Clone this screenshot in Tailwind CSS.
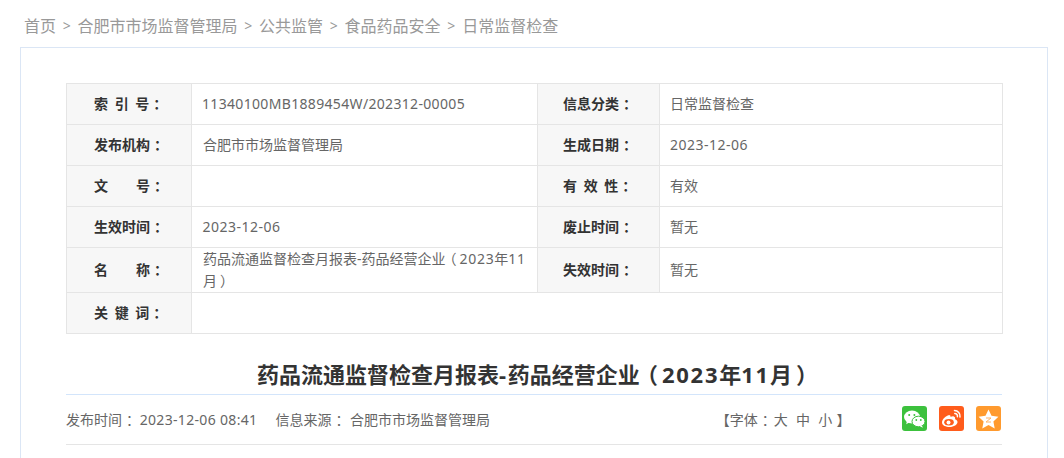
<!DOCTYPE html>
<html lang="zh-CN">
<head>
<meta charset="utf-8"/>
<title>日常监督检查</title>
<script src="https://cdn.jsdelivr.net/npm/@tailwindcss/browser@4"></script>
</head>
<body class="bg-white font-['Noto_Sans','Noto_Sans_CJK_SC',sans-serif] overflow-hidden h-[458px]">
<div class="w-[1028px] ml-[20px]">
  <nav class="h-[47px] pl-[4px] pt-[14px] text-[16px] leading-[24px] text-[#999] flex items-start gap-[6.75px]">
    <a>首页</a><span class="text-[14px]">&gt;</span><a>合肥市市场监督管理局</a><span class="text-[14px]">&gt;</span><a>公共监管</a><span class="text-[14px]">&gt;</span><a>食品药品安全</a><span class="text-[14px]">&gt;</span><a>日常监督检查</a>
  </nav>
  <div class="border border-[#dbe6f5] pt-[35px] px-[45px] h-[500px]">
    <table class="w-[936px] table-fixed border-collapse text-[14px] leading-[20px] text-[#666]">
      <colgroup><col class="w-[125px]"/><col class="w-[346px]"/><col class="w-[122px]"/><col class="w-[343px]"/></colgroup>
      <tbody>
        <tr class="h-[41px]">
          <th class="border border-[#e5e5e5] bg-[#f7f7f7] text-[#333] font-bold text-left pl-[27px] [word-spacing:3px]">索 引 号<span class="[font-feature-settings:'halt'] ml-[4px] mr-[3px]">：</span></th>
          <td class="border border-[#e5e5e5] px-[10px]"><span class="tracking-[0.33px]">11340100MB1889454W/202312-00005</span></td>
          <th class="border border-[#e5e5e5] bg-[#f7f7f7] text-[#333] font-bold text-left pl-[25px]">信息分类<span class="[font-feature-settings:'halt'] ml-[4px] mr-[3px]">：</span></th>
          <td class="border border-[#e5e5e5] px-[10px]">日常监督检查</td>
        </tr>
        <tr class="h-[41px]">
          <th class="border border-[#e5e5e5] bg-[#f7f7f7] text-[#333] font-bold text-left pl-[27px]">发布机构<span class="[font-feature-settings:'halt'] ml-[4px] mr-[3px]">：</span></th>
          <td class="border border-[#e5e5e5] px-[11px]">合肥市市场监督管理局</td>
          <th class="border border-[#e5e5e5] bg-[#f7f7f7] text-[#333] font-bold text-left pl-[25px]">生成日期<span class="[font-feature-settings:'halt'] ml-[4px] mr-[3px]">：</span></th>
          <td class="border border-[#e5e5e5] px-[10px]"><span class="tracking-[0.5px]">2023-12-06</span></td>
        </tr>
        <tr class="h-[41px]">
          <th class="border border-[#e5e5e5] bg-[#f7f7f7] text-[#333] font-bold text-left pl-[27px]"><span class="inline-flex w-[56px] justify-between"><span>文</span><span>号</span></span><span class="[font-feature-settings:'halt'] ml-[4px] mr-[3px]">：</span></th>
          <td class="border border-[#e5e5e5] px-[11px]"></td>
          <th class="border border-[#e5e5e5] bg-[#f7f7f7] text-[#333] font-bold text-left pl-[25px] [word-spacing:3px]">有 效 性<span class="[font-feature-settings:'halt'] ml-[4px] mr-[3px]">：</span></th>
          <td class="border border-[#e5e5e5] px-[10px]">有效</td>
        </tr>
        <tr class="h-[41px]">
          <th class="border border-[#e5e5e5] bg-[#f7f7f7] text-[#333] font-bold text-left pl-[27px]">生效时间<span class="[font-feature-settings:'halt'] ml-[4px] mr-[3px]">：</span></th>
          <td class="border border-[#e5e5e5] px-[10px]"><span class="tracking-[0.5px] ml-[0.5px]">2023-12-06</span></td>
          <th class="border border-[#e5e5e5] bg-[#f7f7f7] text-[#333] font-bold text-left pl-[25px]">废止时间<span class="[font-feature-settings:'halt'] ml-[4px] mr-[3px]">：</span></th>
          <td class="border border-[#e5e5e5] px-[10px]">暂无</td>
        </tr>
        <tr class="h-[45px]">
          <th class="border border-[#e5e5e5] bg-[#f7f7f7] text-[#333] font-bold text-left pl-[27px]"><span class="inline-flex w-[56px] justify-between"><span>名</span><span>称</span></span><span class="[font-feature-settings:'halt'] ml-[4px] mr-[3px]">：</span></th>
          <td class="border border-[#e5e5e5] px-[11px] leading-[22px]">
            <span class="block whitespace-nowrap">药品流通监督检查月报表-药品经营企业<span class="[font-feature-settings:'halt'] ml-[4px] mr-[3px]">（</span><span class="tracking-[0.7px]">2023</span>年<span class="tracking-[0.7px]">11</span></span>
            <span class="block">月<span class="[font-feature-settings:'halt'] ml-[3px] mr-[4px]">）</span></span>
          </td>
          <th class="border border-[#e5e5e5] bg-[#f7f7f7] text-[#333] font-bold text-left pl-[25px]">失效时间<span class="[font-feature-settings:'halt'] ml-[4px] mr-[3px]">：</span></th>
          <td class="border border-[#e5e5e5] px-[10px]">暂无</td>
        </tr>
        <tr class="h-[41px]">
          <th class="border border-[#e5e5e5] bg-[#f7f7f7] text-[#333] font-bold text-left pl-[27px] [word-spacing:3px]">关 键 词<span class="[font-feature-settings:'halt'] ml-[4px] mr-[3px]">：</span></th>
          <td class="border border-[#e5e5e5] px-[11px]" colspan="3"></td>
        </tr>
      </tbody>
    </table>
    <div class="w-[936px]">
      <h1 class="h-[61px] pt-[21px] pl-[3px] text-center text-[22px] leading-[38px] font-bold text-[#333] border-b border-[#d3e5fb]">药品流通监督检查月报表<span class="tracking-[1.75px]">-</span>药品经营企业<span class="[font-feature-settings:'halt'] ml-[7px] mr-[4px]">（</span><span class="tracking-[1.75px]">2023</span>年<span class="tracking-[1.75px]">11</span>月<span class="[font-feature-settings:'halt'] ml-[4px] mr-[7px]">）</span></h1>
      <div class="h-[50px] flex items-center border-b border-[#e5e5e5] text-[14px] text-[#666]">
        <span>发布时间<span class="[font-feature-settings:'halt'] ml-[4px] mr-[3px]">：</span> <span class="tracking-[0.33px]">2023-12-06 08:41</span></span>
        <span class="ml-[18px]">信息来源<span class="[font-feature-settings:'halt'] ml-[4px] mr-[3px]">：</span> <span class="ml-[1px]">合肥市市场监督管理局</span></span>
        <span class="ml-auto mr-[51.5px] [word-spacing:0.5px]">【字体<span class="[font-feature-settings:'halt'] ml-[4px] mr-[5px]">：</span>大&nbsp; 中&nbsp; 小 】</span>
        <div class="flex gap-[12px] mr-[1px] mb-[2px]">
          <span class="w-[25px] h-[25px] rounded-[3px] bg-[#3cc13d] flex items-center justify-center">
            <svg width="21" height="18" viewBox="0 0 21 18" fill="#fff"><ellipse cx="8" cy="7" rx="8" ry="6.5"/><path d="M3 11l-.8 3.2L6 12z"/><ellipse cx="14.5" cy="11.5" rx="6.500" ry="5.300" stroke="#3cc13d"/><path d="M18 15.500l.8 2.300-3-1.600z"/><circle cx="5.200" cy="5" r="1" fill="#3cc13d"/><circle cx="10.400" cy="5" r="1" fill="#3cc13d"/><circle cx="12.300" cy="10" r=".9" fill="#3cc13d"/><circle cx="16.800" cy="10" r=".9" fill="#3cc13d"/></svg>
          </span>
          <span class="w-[25px] h-[25px] rounded-[3px] bg-[#ff5c1c] flex items-center justify-center">
            <svg width="21" height="19" viewBox="0 0 21 19" fill="none"><path d="M8.500 6C5 6.500 1 10 1 13.500c0 3 4 4.500 7.500 4.500 4.500 0 8-2.500 8-5 0-1.600-1.300-2.300-2.600-2.700.6-1.400.3-2.600-1.200-2.900-1.200-.2-2.500.3-3.200.6.300-1-.1-2-1.500-2z" fill="#fff"/><ellipse cx="8" cy="13.300" rx="4.800" ry="3.300" fill="#ff5c1c"/><circle cx="7.500" cy="13.500" r="2" fill="#fff"/><path d="M13.500 1.500c3.500 0 6 3 5.500 6.500M13.800 4.500c1.800 0 3 1.500 2.600 3.200" stroke="#fff" stroke-width="1.500" stroke-linecap="round"/></svg>
          </span>
          <span class="w-[25px] h-[25px] rounded-[3px] bg-[#ff9a2e] flex items-center justify-center">
            <svg width="21" height="20" viewBox="0 0 21 20"><path d="M10.500.5l3 6.300 6.900.9-5 4.800 1.300 6.900-6.200-3.300-6.200 3.300 1.300-6.900-5-4.800 6.900-.9z" fill="#fff"/><path d="M8 9h5l-5 4h5" fill="none" stroke="#ffb469" stroke-width="1"/></svg>
          </span>
        </div>
      </div>
    </div>
  </div>
</div>
</body>
</html>
